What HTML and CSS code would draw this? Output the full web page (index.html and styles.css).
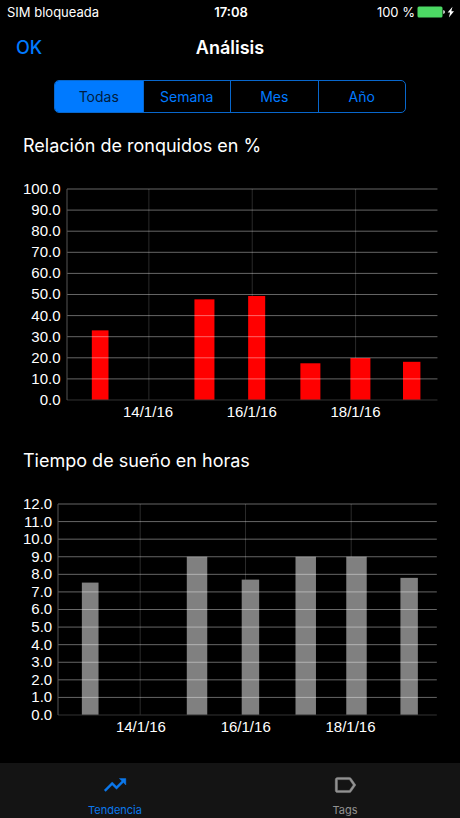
FILE: index.html
```html
<!DOCTYPE html>
<html lang="es">
<head>
<meta charset="utf-8">
<meta name="viewport" content="width=device-width, initial-scale=1">
<title>Análisis</title>
<link rel="stylesheet" href="styles.css">
</head>
<body>
<div class="status">
  <span class="carrier">SIM bloqueada</span>
  <span class="clock">17:08</span>
  <span class="power">
    <span>100 %</span>
    <svg class="battery" viewBox="0 0 38 12" aria-hidden="true">
      <rect x="0.5" y="0.500" width="25" height="11" rx="1.5" fill="#4cd964"/>
      <path d="M26.300 4q1.6.5 1.6 2t-1.6 2z" fill="#fff"/>
      <path d="M35.500 .8L30.600 6.600h2.500L31.900 11.500 37 5.200h-2.700z" fill="#fff"/>
    </svg>
  </span>
</div>
<header class="navbar">
  <button type="button" class="ok">OK</button>
  <h1 class="title">Análisis</h1>
</header>
<main>
  <div class="segments" role="group" aria-label="Periodo">
    <button type="button" class="segment selected" aria-pressed="true">Todas</button>
    <button type="button" class="segment" aria-pressed="false">Semana</button>
    <button type="button" class="segment" aria-pressed="false">Mes</button>
    <button type="button" class="segment" aria-pressed="false">Año</button>
  </div>

  <section class="panel">
    <h2 class="heading">Relación de ronquidos en %</h2>
    <div class="chart">
      <ol class="y-axis">
        <li>100.0</li><li>90.0</li><li>80.0</li><li>70.0</li><li>60.0</li><li>50.0</li><li>40.0</li><li>30.0</li><li>20.0</li><li>10.0</li><li>0.0</li>
      </ol>
      <svg class="plot" viewBox="0 0 100 100" preserveAspectRatio="none" aria-hidden="true">
        <path class="days" d="M22.1 0V100M50 0V100M77.900 0V100"/>
        <g class="snore">
          <rect x="6.7" y="67" width="4.5" height="33"/>
          <rect x="34.4" y="52.300" width="5.400" height="47.700"/>
          <rect x="48.900" y="50.700" width="4.600" height="49.300"/>
          <rect x="63" y="82.600" width="5.400" height="17.400"/>
          <rect x="76.500" y="80.100" width="5.400" height="19.900"/>
          <rect x="90.700" y="81.900" width="4.700" height="18.100"/>
        </g>
        <path class="levels" d="M0 0H100M0 10H100M0 20H100M0 30H100M0 40H100M0 50H100M0 60H100M0 70H100M0 80H100M0 90H100"/>
        <path class="base" d="M0 100H100"/>
        <path class="axis" d="M0 0V100"/>
      </svg>
      <ol class="x-axis"><li>14/1/16</li><li>16/1/16</li><li>18/1/16</li></ol>
    </div>
  </section>

  <section class="panel">
    <h2 class="heading">Tiempo de sueño en horas</h2>
    <div class="chart">
      <ol class="y-axis">
        <li>12.0</li><li>11.0</li><li>10.0</li><li>9.0</li><li>8.0</li><li>7.0</li><li>6.0</li><li>5.0</li><li>4.0</li><li>3.0</li><li>2.0</li><li>1.0</li><li>0.0</li>
      </ol>
      <svg class="plot" viewBox="0 0 100 12" preserveAspectRatio="none" aria-hidden="true">
        <path class="days" d="M21.700 0V12M49.500 0V12M77.400 0V12"/>
        <g class="sleep">
          <rect x="6.300" y="4.470" width="4.400" height="7.530"/>
          <rect x="34" y="3" width="5.400" height="9"/>
          <rect x="48.500" y="4.300" width="4.600" height="7.700"/>
          <rect x="62.700" y="3" width="5.400" height="9"/>
          <rect x="76.100" y="3" width="5.400" height="9"/>
          <rect x="90.400" y="4.200" width="4.600" height="7.800"/>
        </g>
        <path class="levels" d="M0 0H100M0 1H100M0 2H100M0 3H100M0 4H100M0 5H100M0 6H100M0 7H100M0 8H100M0 9H100M0 10H100M0 11H100"/>
        <path class="base" d="M0 12H100"/>
        <path class="axis" d="M0 0V12"/>
      </svg>
      <ol class="x-axis"><li>14/1/16</li><li>16/1/16</li><li>18/1/16</li></ol>
    </div>
  </section>
</main>
<nav class="tabs">
  <a href="#tendencia" class="tab active" aria-current="page">
    <svg class="icon" viewBox="0 0 24 24" aria-hidden="true"><path fill="currentColor" stroke="currentColor" stroke-width=".4" d="M16 6l2.290 2.290-4.880 4.880-4-4L2 16.590 3.410 18l6-6 4 4 6.300-6.290L22 12V6z"/></svg>
    <span>Tendencia</span>
  </a>
  <a href="#tags" class="tab">
    <svg class="icon" viewBox="0 0 24 24" aria-hidden="true"><path fill="currentColor" stroke="currentColor" stroke-width=".4" d="M17.630 5.840C17.270 5.330 16.670 5 16 5L5 5.010C3.900 5.010 3 5.900 3 7v10c0 1.100.9 1.990 2 1.990L16 19c.67 0 1.270-.33 1.630-.84L22 12l-4.370-6.160zM16 17H5V7h11l3.550 5L16 17z"/></svg>
    <span>Tags</span>
  </a>
</nav>
</body>
</html>
```
FILE: styles.css
```css
* { box-sizing: border-box; }

body {
  margin: 0;
  min-height: 100vh;
  display: flex;
  flex-direction: column;
  background: #000;
  color: #fff;
  font-family: Inter, "Liberation Sans", sans-serif;
}

button {
  padding: 0;
  border: 0;
  background: none;
  font: inherit;
  color: #007aff;
}

h1, h2, ol { margin: 0; padding: 0; font-weight: 400; list-style: none; }

.status {
  display: grid;
  grid-template-columns: 1fr auto 1fr;
  align-items: center;
  height: 24px;
  padding: 0 5px 0 7px;
  font-size: 13px;
}

.clock { font-weight: 600; }

.power {
  display: flex;
  justify-content: flex-end;
  align-items: center;
  gap: 2px;
}

.battery { width: 38px; height: 12px; }

.navbar {
  display: grid;
  grid-template-columns: 1fr auto 1fr;
  align-items: center;
  height: 46px;
  padding: 0 16px;
  font-size: 18px;
}

.ok { justify-self: start; font-weight: 500; }
.title { font-size: 18px; font-weight: 600; }

.segments {
  display: grid;
  grid-template-columns: repeat(4, 1fr);
  height: 33px;
  margin: 10px 54px 0;
  border: 1px solid #0867cc;
  border-radius: 5px;
  overflow: hidden;
  font-size: 14px;
}

.segment + .segment { border-left: 1px solid #0867cc; }
.segment.selected { background: #007aff; color: #001c40; }

.panel { padding: 21px 23px 0; }
.panel + .panel { padding-top: 27px; }
.heading { font-size: 18px; line-height: 24px; }

.chart {
  display: grid;
  grid-template-columns: auto 1fr;
  column-gap: 6px;
  margin-top: 31px;
  font: 15px/20px "Liberation Sans", Arial, sans-serif;
}

.y-axis {
  display: flex;
  flex-direction: column;
  justify-content: space-between;
  text-align: right;
}

.y-axis li { display: flex; align-items: center; justify-content: flex-end; height: 0; }

.plot { width: 100%; height: 211px; overflow: visible; }
.plot path { fill: none; stroke-width: 1px; vector-effect: non-scaling-stroke; }
.plot .days { stroke: #2a2a2a; }
.plot .levels { stroke: rgba(255, 255, 255, 0.4); }
.plot .base { stroke: #333; }
.plot .axis { stroke: #555; }
.snore { fill: #f00; }
.sleep { fill: #808080; }

.x-axis {
  grid-column: 2;
  display: grid;
  grid-template-columns: repeat(3, 1fr);
  padding: 2px 8% 0;
  text-align: center;
}

.panel + .panel .x-axis { padding-right: 9%; }

.tabs {
  display: grid;
  grid-template-columns: 1fr 1fr;
  height: 55px;
  margin-top: auto;
  background: #141414;
}

.tab {
  display: flex;
  flex-direction: column;
  align-items: center;
  gap: 5px;
  padding-top: 9px;
  color: #929292;
  font-size: 11px;
  line-height: 14px;
  text-decoration: none;
}

.tab.active { color: #0b78ec; }
.icon { width: 26px; height: 26px; }
```
